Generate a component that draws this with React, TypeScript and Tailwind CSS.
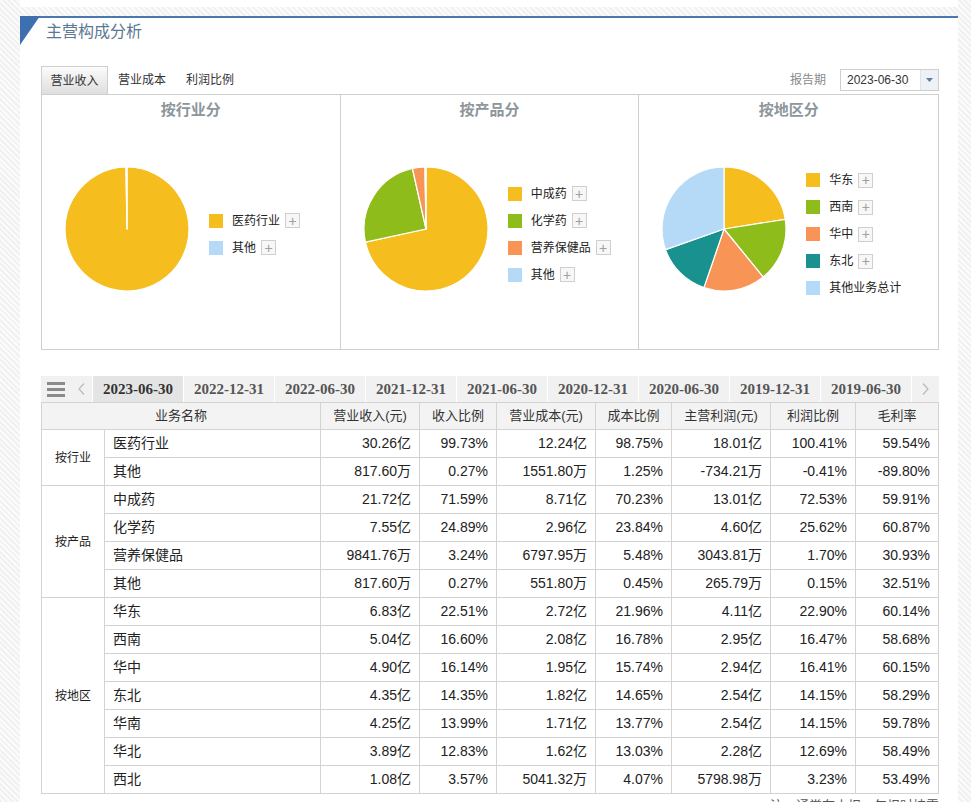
import React from "react";

type Slice = { label: string; value: number; color: string; plus?: boolean };

const YELLOW = "#f6bd1e";
const GREEN = "#8ebd1b";
const ORANGE = "#f99457";
const TEAL = "#19928f";
const LIGHT = "#b4daf8";

const charts: { title: string; slices: Slice[] }[] = [
  {
    title: "按行业分",
    slices: [
      { label: "医药行业", value: 99.73, color: YELLOW, plus: true },
      { label: "其他", value: 0.27, color: LIGHT, plus: true },
    ],
  },
  {
    title: "按产品分",
    slices: [
      { label: "中成药", value: 71.59, color: YELLOW, plus: true },
      { label: "化学药", value: 24.89, color: GREEN, plus: true },
      { label: "营养保健品", value: 3.24, color: ORANGE, plus: true },
      { label: "其他", value: 0.27, color: LIGHT, plus: true },
    ],
  },
  {
    title: "按地区分",
    slices: [
      { label: "华东", value: 22.51, color: YELLOW, plus: true },
      { label: "西南", value: 16.6, color: GREEN, plus: true },
      { label: "华中", value: 16.14, color: ORANGE, plus: true },
      { label: "东北", value: 14.35, color: TEAL, plus: true },
      { label: "其他业务总计", value: 30.4, color: LIGHT },
    ],
  },
];

const dates = [
  "2023-06-30",
  "2022-12-31",
  "2022-06-30",
  "2021-12-31",
  "2021-06-30",
  "2020-12-31",
  "2020-06-30",
  "2019-12-31",
  "2019-06-30",
];

const headers = ["营业收入(元)", "收入比例", "营业成本(元)", "成本比例", "主营利润(元)", "利润比例", "毛利率"];

const groups: { name: string; rows: string[][] }[] = [
  {
    name: "按行业",
    rows: [
      ["医药行业", "30.26亿", "99.73%", "12.24亿", "98.75%", "18.01亿", "100.41%", "59.54%"],
      ["其他", "817.60万", "0.27%", "1551.80万", "1.25%", "-734.21万", "-0.41%", "-89.80%"],
    ],
  },
  {
    name: "按产品",
    rows: [
      ["中成药", "21.72亿", "71.59%", "8.71亿", "70.23%", "13.01亿", "72.53%", "59.91%"],
      ["化学药", "7.55亿", "24.89%", "2.96亿", "23.84%", "4.60亿", "25.62%", "60.87%"],
      ["营养保健品", "9841.76万", "3.24%", "6797.95万", "5.48%", "3043.81万", "1.70%", "30.93%"],
      ["其他", "817.60万", "0.27%", "551.80万", "0.45%", "265.79万", "0.15%", "32.51%"],
    ],
  },
  {
    name: "按地区",
    rows: [
      ["华东", "6.83亿", "22.51%", "2.72亿", "21.96%", "4.11亿", "22.90%", "60.14%"],
      ["西南", "5.04亿", "16.60%", "2.08亿", "16.78%", "2.95亿", "16.47%", "58.68%"],
      ["华中", "4.90亿", "16.14%", "1.95亿", "15.74%", "2.94亿", "16.41%", "60.15%"],
      ["东北", "4.35亿", "14.35%", "1.82亿", "14.65%", "2.54亿", "14.15%", "58.29%"],
      ["华南", "4.25亿", "13.99%", "1.71亿", "13.77%", "2.54亿", "14.15%", "59.78%"],
      ["华北", "3.89亿", "12.83%", "1.62亿", "13.03%", "2.28亿", "12.69%", "58.49%"],
      ["西北", "1.08亿", "3.57%", "5041.32万", "4.07%", "5798.98万", "3.23%", "53.49%"],
    ],
  },
];

const colWidths = [63, 216, 99, 77, 99, 76, 99, 85, 83];

function Pie({ slices }: { slices: Slice[] }) {
  const r = 62;
  const c = 64;
  const total = slices.reduce((s, d) => s + d.value, 0);
  let acc = 0;
  return (
    <svg width={128} height={128} viewBox="0 0 128 128" className="shrink-0">
      {slices.map((d) => {
        const a0 = (acc / total) * Math.PI * 2 - Math.PI / 2;
        acc += d.value;
        const a1 = (acc / total) * Math.PI * 2 - Math.PI / 2;
        const x0 = c + r * Math.cos(a0);
        const y0 = c + r * Math.sin(a0);
        const x1 = c + r * Math.cos(a1);
        const y1 = c + r * Math.sin(a1);
        const large = a1 - a0 > Math.PI ? 1 : 0;
        return (
          <path
            key={d.label}
            d={`M${c} ${c} L${x0} ${y0} A${r} ${r} 0 ${large} 1 ${x1} ${y1} Z`}
            fill={d.color}
            stroke="#fff"
            strokeWidth={1.2}
            strokeLinejoin="round"
          />
        );
      })}
    </svg>
  );
}

function PlusBox() {
  return (
    <span className="ml-[5px] flex h-[15px] w-[15px] items-center justify-center border border-[#cfcfcf] bg-[#f7f7f7] text-[14px] leading-none text-[#a0a0a0]">
      +
    </span>
  );
}

export default function App() {
  return (
    <div className="min-h-screen w-[971px] bg-[repeating-linear-gradient(45deg,#f1f1f1_0px,#f1f1f1_2px,#fbfbfb_2px,#fbfbfb_4px)] font-['Liberation_Sans','Noto_Sans_CJK_SC',sans-serif] text-[#333]">
      <div className="ml-[20px] h-[7px] w-[938px] bg-white" />
      <div className="ml-[20px] mt-[9px] w-[938px] border-t-2 border-[#4a78ae] bg-white pb-[20px]">
        {/* header */}
        <div className="relative flex h-[28px] items-center pl-[26px]">
          <svg className="absolute left-0 top-[-2px]" width="20" height="30" viewBox="0 0 20 30">
            <polygon points="0,0 20,0 0,29" fill="#3e70b0" />
          </svg>
          <span className="text-[16px] leading-none text-[#5a7893]">主营构成分析</span>
        </div>

        <div className="mt-[20px] pl-[21px] pr-[19px]">
          {/* tabs */}
          <div className="flex h-[28px] items-center justify-between">
            <div className="flex h-full items-end text-[12px] text-[#333]">
              <div className="flex h-[28px] w-[67px] items-center justify-center border border-b-0 border-[#cfcfcf] bg-[linear-gradient(#fbfbfb,#dedede)]">
                营业收入
              </div>
              <div className="flex h-[28px] w-[68px] items-center justify-center">营业成本</div>
              <div className="flex h-[28px] w-[68px] items-center justify-center">利润比例</div>
            </div>
            <div className="flex items-center">
              <span className="mr-[14px] text-[12px] text-[#8a8a8a]">报告期</span>
              <div className="flex h-[22px] w-[99px] items-stretch border border-[#cfcfcf] bg-white">
                <span className="flex flex-1 items-center pl-[6px] text-[12px] text-[#333]">2023-06-30</span>
                <span className="flex w-[18px] items-center justify-center border-l border-[#dde3ea] bg-[#eef2f7]">
                  <svg width="7" height="4" viewBox="0 0 7 4">
                    <polygon points="0,0 7,0 3.5,4" fill="#5b7fa6" />
                  </svg>
                </span>
              </div>
            </div>
          </div>

          {/* charts */}
          <div className="grid h-[256px] grid-cols-3 divide-x divide-[#d0d0d0] border border-[#cfcfcf]">
            {charts.map((ch) => (
              <div key={ch.title} className="flex flex-col">
                <div className="flex h-[30px] items-center justify-center text-[15px] font-bold text-[#8d969b]">
                  {ch.title}
                </div>
                <div className="flex h-[208px] items-center">
                  <div className="ml-[21px]">
                    <Pie slices={ch.slices} />
                  </div>
                  <div className="ml-[18px] mt-[10px] flex flex-col gap-[12px]">
                    {ch.slices.map((s) => (
                      <div key={s.label} className="flex h-[15px] items-center">
                        <span className="h-[14px] w-[14px]" style={{ backgroundColor: s.color }} />
                        <span className="ml-[9px] text-[12px] leading-none text-[#222]">{s.label}</span>
                        {s.plus && <PlusBox />}
                      </div>
                    ))}
                  </div>
                </div>
              </div>
            ))}
          </div>

          {/* date tabs */}
          <div className="mt-[26px] flex h-[26px] bg-[#f1f1f1]">
            <div className="flex w-[29px] flex-col items-center justify-center gap-[3px]">
              <span className="h-[3px] w-[18px] bg-[#8a8a8a]" />
              <span className="h-[3px] w-[18px] bg-[#8a8a8a]" />
              <span className="h-[3px] w-[18px] bg-[#8a8a8a]" />
            </div>
            <div className="flex w-[22px] items-center justify-center">
              <svg width="7" height="12" viewBox="0 0 7 12">
                <polyline points="6,0.5 1,6 6,11.5" fill="none" stroke="#b9b9b9" strokeWidth="1.2" />
              </svg>
            </div>
            {dates.map((d, i) => (
              <div
                key={d}
                className={`flex w-[91px] items-center justify-center border-l border-white font-['Liberation_Serif',serif] text-[15px] font-bold ${
                  i === 0 ? "bg-[#e4e4e4] text-[#333]" : "text-[#555]"
                }`}
              >
                {d}
              </div>
            ))}
            <div className="flex flex-1 items-center justify-center border-l border-white">
              <svg width="7" height="12" viewBox="0 0 7 12">
                <polyline points="1,0.5 6,6 1,11.5" fill="none" stroke="#b9b9b9" strokeWidth="1.2" />
              </svg>
            </div>
          </div>

          {/* table */}
          <table className="w-[897px] table-fixed border-collapse border border-[#d3d3d3]">
            <colgroup>
              {colWidths.map((w, i) => (
                <col key={i} style={{ width: w }} />
              ))}
            </colgroup>
            <thead>
              <tr className="h-[27px] bg-[#f3f3f3] text-[13px] text-[#333]">
                <th colSpan={2} className="border border-[#d3d3d3] font-normal">
                  业务名称
                </th>
                {headers.map((h) => (
                  <th key={h} className="border border-[#d3d3d3] font-normal">
                    {h}
                  </th>
                ))}
              </tr>
            </thead>
            <tbody>
              {groups.map((g) =>
                g.rows.map((r, ri) => (
                  <tr key={g.name + r[0]} className="h-[28px] text-[14px] text-[#222]">
                    {ri === 0 && (
                      <td rowSpan={g.rows.length} className="border border-[#d3d3d3] text-center text-[12px]">
                        {g.name}
                      </td>
                    )}
                    <td className="border border-[#d3d3d3] pl-[8px]">{r[0]}</td>
                    {r.slice(1).map((v, vi) => (
                      <td key={vi} className="border border-[#d3d3d3] pr-[8px] text-right">
                        {v}
                      </td>
                    ))}
                  </tr>
                ))
              )}
            </tbody>
          </table>
          <div className="mt-[2px] text-right text-[13px] text-[#555]">注：通常在中报、年报时披露</div>
        </div>
      </div>
    </div>
  );
}
